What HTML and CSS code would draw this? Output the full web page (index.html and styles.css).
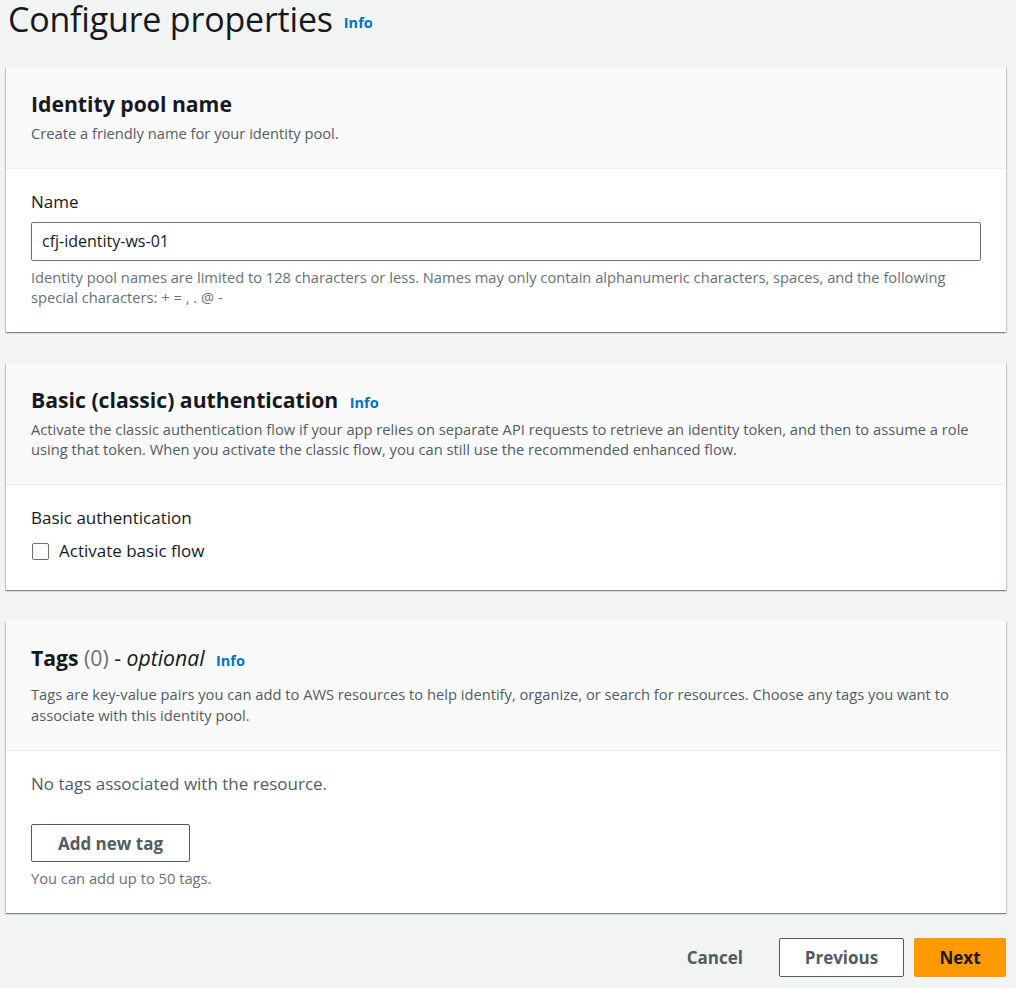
FILE: index.html
```html
<!DOCTYPE html>
<html>
<head>
<meta charset="utf-8">
<link rel="stylesheet" href="styles.css">
</head>
<body>
<div class="page">
  <div class="title-row">
    <h1 class="title">Configure properties</h1>
    <span class="info title-info">Info</span>
  </div>

  <div class="card">
    <div class="card-header">
      <h2 class="card-title">Identity pool name</h2>
      <p class="card-desc">Create a friendly name for your identity pool.</p>
    </div>
    <div class="card-body">
      <div class="field-label">Name</div>
      <div class="input">cfj-identity-ws-01</div>
      <p class="hint">Identity pool names are limited to 128 characters or less. Names may only contain alphanumeric characters, spaces, and the following special characters: + = , . @ -</p>
    </div>
  </div>

  <div class="card">
    <div class="card-header">
      <h2 class="card-title">Basic (classic) authentication <span class="info">Info</span></h2>
      <p class="card-desc">Activate the classic authentication flow if your app relies on separate API requests to retrieve an identity token, and then to assume a role using that token. When you activate the classic flow, you can still use the recommended enhanced flow.</p>
    </div>
    <div class="card-body body-check">
      <div class="field-label">Basic authentication</div>
      <label class="check-row"><span class="checkbox"></span><span>Activate basic flow</span></label>
    </div>
  </div>

  <div class="card">
    <div class="card-header header-tags">
      <h2 class="card-title">Tags <span class="count">(0)</span> <span class="opt">- <em>optional</em></span> <span class="info">Info</span></h2>
      <p class="card-desc desc-tags">Tags are key-value pairs you can add to AWS resources to help identify, organize, or search for resources. Choose any tags you want to associate with this identity pool.</p>
    </div>
    <div class="card-body">
      <p class="empty">No tags associated with the resource.</p>
      <button class="btn btn-normal">Add new tag</button>
      <p class="hint hint-tags">You can add up to 50 tags.</p>
    </div>
  </div>

  <div class="actions">
    <button class="btn btn-link">Cancel</button>
    <button class="btn btn-normal btn-prev">Previous</button>
    <button class="btn btn-primary">Next</button>
  </div>
</div>
</body>
</html>
```
FILE: styles.css
```css
* { box-sizing: border-box; }
html, body {
  margin: 0;
  padding: 0;
  background: #f2f3f3;
}
body {
  font-family: "Open Sans", "Noto Sans", "Liberation Sans", Arial, sans-serif;
  color: #16191f;
}
.page {
  padding: 0 10px 0 6px;
}
.title-row {
  display: flex;
  align-items: flex-start;
  padding-left: 2px;
  height: 67px;
}
.title {
  margin: 0;
  font-size: 34px;
  line-height: 38px;
  font-weight: 400;
  letter-spacing: -0.2px;
  color: #16191f;
}
.info {
  font-size: 14.5px;
  line-height: 1;
  font-weight: 700;
  color: #0073bb;
  margin-left: 11px;
}
.title-info {
  margin-top: 16px;
}
.card {
  background: #fff;
  box-shadow: 0 1px 1px 0 rgba(0,28,36,.3), 1px 1px 1px 0 rgba(0,28,36,.15), -1px 1px 1px 0 rgba(0,28,36,.15);
  margin-bottom: 31px;
}
.card-header {
  background: #fafafa;
  border-bottom: 1px solid #eaeded;
  padding: 23px 25px 25px;
}
.card-title {
  margin: 0 0 5px;
  font-size: 21.2px;
  line-height: 28px;
  height: 28px;
  font-weight: 700;
  color: #16191f;
}
.card-title .info {
  margin-left: 6px;
}
.count {
  font-weight: 400;
  color: #687078;
}
.opt {
  font-weight: 400;
}
.card-desc {
  margin: 0;
  font-size: 14.7px;
  line-height: 20px;
  color: #545b64;
}
.header-tags {
  padding-bottom: 24px;
}
.header-tags .card-title {
  margin-bottom: 12px;
}
.desc-tags {
  line-height: 21px;
}
.card-body {
  padding: 22px 25px 25px;
}
.field-label {
  font-size: 17px;
  line-height: 22px;
  color: #16191f;
  margin-bottom: 9px;
}
.input {
  height: 39px;
  border: 1px solid #687078;
  border-radius: 2px;
  padding: 0 10px;
  font-size: 16px;
  line-height: 37px;
  color: #16191f;
}
.hint {
  margin: 6px 0 0;
  font-size: 14.7px;
  line-height: 20px;
  color: #687078;
}
.body-check {
  padding-bottom: 28px;
}
.body-check .field-label {
  margin-bottom: 11px;
}
.check-row {
  display: flex;
  align-items: center;
  font-size: 17px;
  line-height: 22px;
  color: #16191f;
}
.checkbox {
  width: 17px;
  height: 17px;
  border: 1px solid #687078;
  border-radius: 2px;
  margin: 0 10px 0 1px;
  background: #fff;
}
.empty {
  margin: 0 0 29px;
  font-size: 17px;
  line-height: 22px;
  color: #545b64;
}
.btn {
  font-family: inherit;
  font-size: 17px;
  font-weight: 700;
  border-radius: 2px;
  cursor: pointer;
}
.btn-normal {
  height: 38px;
  width: 159px;
  background: #fff;
  border: 1px solid #545b64;
  color: #545b64;
  padding: 0 10px;
  display: block;
}
.hint-tags {
  margin-top: 6px;
}
.actions {
  display: flex;
  justify-content: flex-end;
  align-items: center;
  margin-top: -6px;
  gap: 10px;
}
.btn-link {
  background: none;
  border: none;
  color: #545b64;
  height: 39px;
  padding: 0 20px;
  margin-right: 6px;
}
.btn-prev {
  height: 39px;
  width: 125px;
}
.btn-primary {
  height: 39px;
  width: 92px;
  background: #ff9900;
  border: 1px solid #ff9900;
  color: #16191f;
}
```
